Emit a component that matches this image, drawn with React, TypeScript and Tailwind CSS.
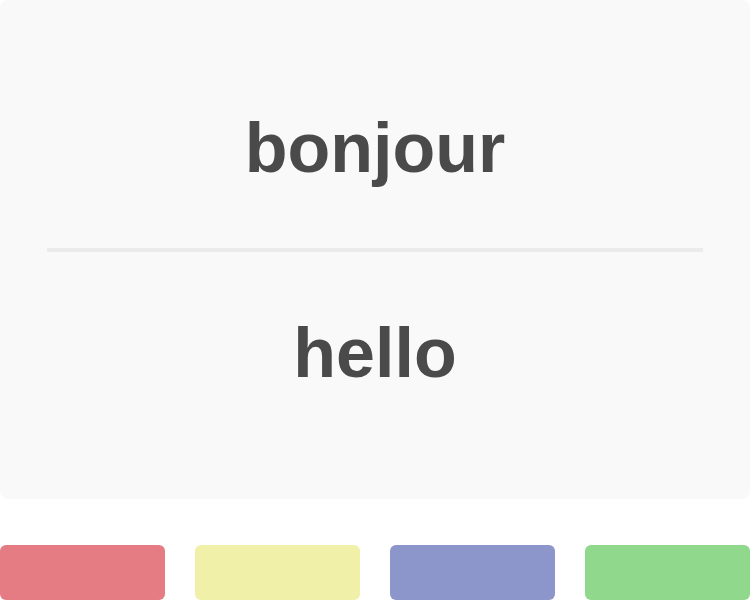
export default function App() {
  return (
    <div className="flex h-[600px] w-[750px] flex-col justify-between bg-white font-['Liberation_Sans',Arial,sans-serif]">
      <div className="flex flex-col items-center rounded-lg bg-[#f9f9f9] pt-[108px] pb-[106px]">
        <h1 className="text-[70px] leading-[80px] font-bold text-[#4a4a4a]">bonjour</h1>
        <div className="mt-[60px] mb-[61px] h-[4px] w-[656px] bg-[#ebebeb]" />
        <h2 className="text-[70px] leading-[80px] font-bold text-[#4a4a4a]">hello</h2>
      </div>
      <div className="flex gap-[30px]">
        <button className="h-[55px] flex-1 rounded-md bg-[#e57c84]" />
        <button className="h-[55px] flex-1 rounded-md bg-[#f0f0a8]" />
        <button className="h-[55px] flex-1 rounded-md bg-[#8c96cb]" />
        <button className="h-[55px] flex-1 rounded-md bg-[#8fd88c]" />
      </div>
    </div>
  );
}
